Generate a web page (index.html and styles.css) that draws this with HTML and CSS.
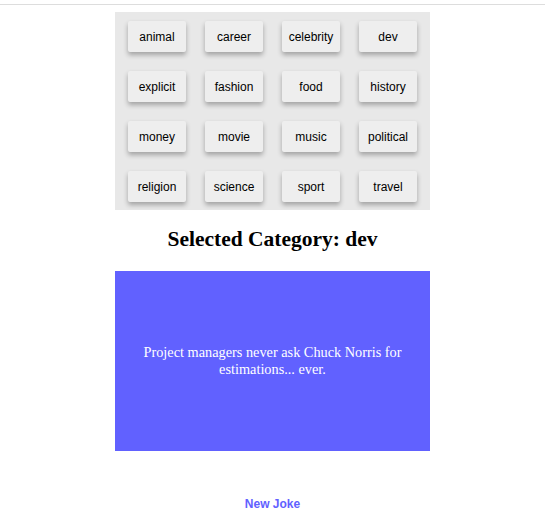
FILE: index.html
```html
<!DOCTYPE html>
<html lang="en">
<head>
<meta charset="utf-8">
<title>Chuck Norris Jokes</title>
<link rel="stylesheet" href="styles.css">
</head>
<body>
<div class="topbar"></div>
<main class="page">
  <div class="categories">
    <button class="cat">animal</button>
    <button class="cat">career</button>
    <button class="cat">celebrity</button>
    <button class="cat">dev</button>
    <button class="cat">explicit</button>
    <button class="cat">fashion</button>
    <button class="cat">food</button>
    <button class="cat">history</button>
    <button class="cat">money</button>
    <button class="cat">movie</button>
    <button class="cat">music</button>
    <button class="cat">political</button>
    <button class="cat">religion</button>
    <button class="cat">science</button>
    <button class="cat">sport</button>
    <button class="cat">travel</button>
  </div>
  <h2 class="selected">Selected Category: dev</h2>
  <div class="joke">
    <p class="joke-text">Project managers never ask Chuck Norris for estimations... ever.</p>
  </div>
  <div class="actions">
    <button class="new-joke">New Joke</button>
  </div>
</main>
</body>
</html>
```

FILE: styles.css
```css
html, body {
  margin: 0;
  padding: 0;
  background: #ffffff;
}

body {
  font-family: "Liberation Serif", "Times New Roman", serif;
  padding-right: 7px;
}

.topbar {
  height: 4px;
  border-bottom: 1px solid #dddddd;
}

.page {
  width: 315px;
  margin: 7px auto 0;
  display: flex;
  flex-direction: column;
  align-items: stretch;
}

.categories {
  background: #e8e8e8;
  display: grid;
  grid-template-columns: repeat(4, 1fr);
  grid-auto-rows: 31px;
  column-gap: 19px;
  row-gap: 19px;
  padding: 9px 13px 8px;
}

.cat {
  font-family: "Liberation Sans", Arial, sans-serif;
  font-size: 12px;
  color: #000000;
  background: #eeeeee;
  border: none;
  border-radius: 2px;
  box-shadow: 0 3px 5px rgba(0, 0, 0, 0.3);
  padding: 0;
  margin: 0;
  cursor: pointer;
}

.selected {
  font-family: "Liberation Serif", "Times New Roman", serif;
  font-weight: bold;
  font-size: 21.5px;
  line-height: 25px;
  text-align: center;
  margin: 17px 0 19px;
  color: #000000;
}

.joke {
  background: #6161ff;
  height: 180px;
  display: flex;
  align-items: center;
  justify-content: center;
  padding: 0 12px;
}

.joke-text {
  margin: 0;
  color: #ffffff;
  font-size: 14.3px;
  line-height: 17px;
  text-align: center;
}

.actions {
  display: flex;
  justify-content: center;
  margin-top: 40px;
}

.new-joke {
  font-family: "Liberation Sans", Arial, sans-serif;
  font-weight: bold;
  font-size: 12px;
  line-height: 14px;
  color: #6161ff;
  background: none;
  border: none;
  padding: 6px 16px;
  cursor: pointer;
}
```
